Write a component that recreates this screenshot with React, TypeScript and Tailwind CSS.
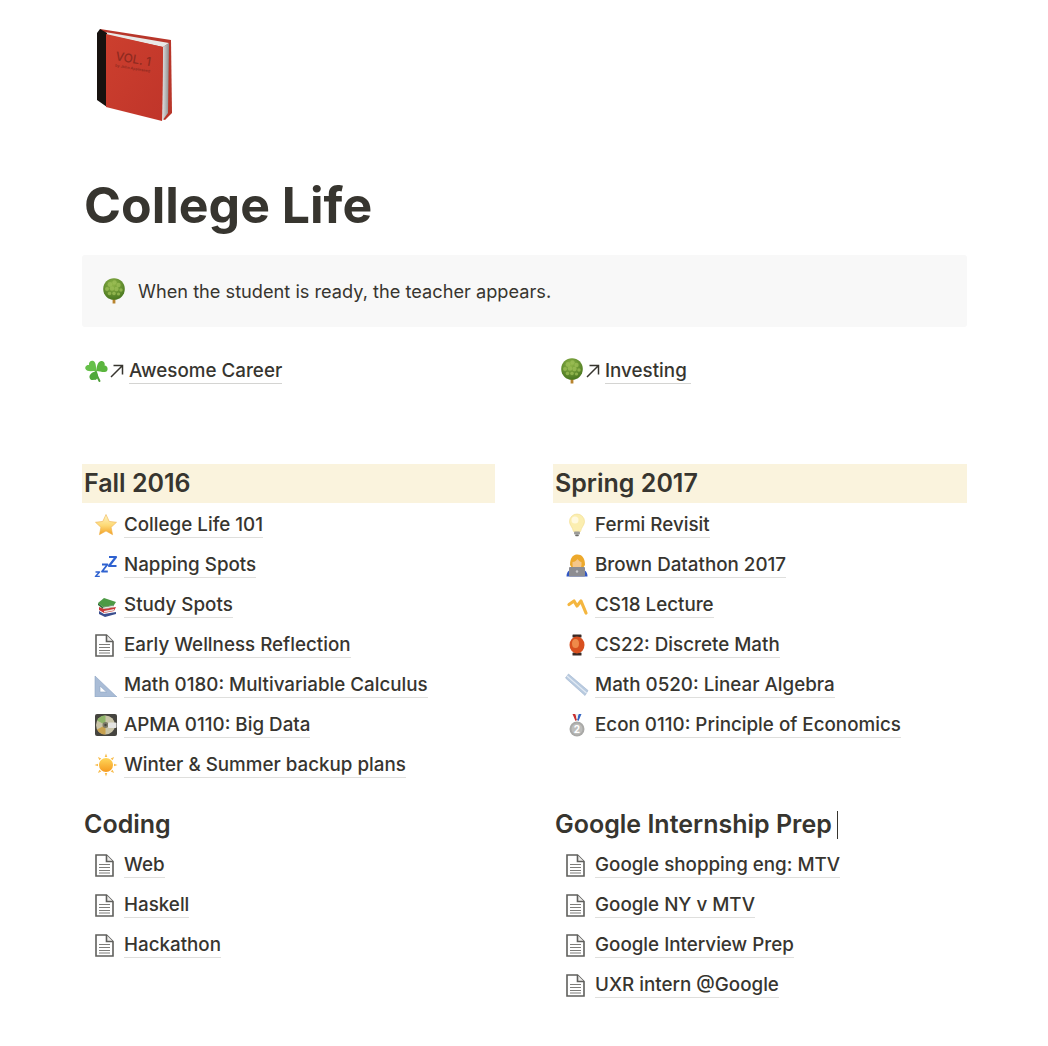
import type { ReactNode } from 'react';

const Doc = () => (
  <svg viewBox="0 0 19 23" className="mr-[4px] h-[23px] w-[19px]" fill="none" stroke="#5f5f5c" strokeWidth="1.600">
    <path d="M1 1h10.500L18 7.500V22H1z" fill="#fff" />
    <path d="M11.500 1v6.500H18" fill="#ecebea" />
    <path d="M4 10.500h11M4 13.500h11M4 16.500h11M4 19h11" strokeWidth="1.100" stroke="#7d7d7a" />
  </svg>
);

const Tree = () => (
  <svg viewBox="0 0 24 26" className="h-[26px] w-[24px]">
    <defs>
      <radialGradient id="crown" cx="0.45" cy="0.3" r="0.8">
        <stop offset="0" stopColor="#8fb548" />
        <stop offset="1" stopColor="#3f6e1a" />
      </radialGradient>
    </defs>
    <rect x="10.600" y="18" width="2.800" height="7.500" fill="#b8842f" />
    <circle cx="12" cy="11" r="10.800" fill="url(#crown)" />
    <g fill="#9dbf57" opacity=".75">
      <circle cx="8" cy="6.500" r="2.400" />
      <circle cx="12.500" cy="4.500" r="2.200" />
      <circle cx="16.500" cy="7" r="2.200" />
      <circle cx="5" cy="11" r="2" />
      <circle cx="10" cy="10.500" r="2.300" />
      <circle cx="14.500" cy="11" r="2.200" />
      <circle cx="19" cy="12" r="1.700" />
      <circle cx="7.500" cy="15.500" r="1.800" />
      <circle cx="12" cy="15.500" r="1.800" />
      <circle cx="16.500" cy="16" r="1.600" />
    </g>
  </svg>
);

const Clover = () => (
  <svg viewBox="0 0 24 24" className="h-[24px] w-[24px]">
    <path d="M12 13q1 5 3.500 9" stroke="#4fa03a" strokeWidth="2" fill="none" strokeLinecap="round" />
    <path d="M12 12C7 12 3 13 1.500 10 .5 7.500 3 5.500 5 6 4.500 3 7 1 9.500 2 11.500 3 12.500 7 12 12z" fill="#66c04a" />
    <path d="M12 12c1-5 1.500-9 5-10 2.500-.5 4.500 2 3.500 4.500 2.500 0 4 3 2.500 5.500-2 2.500-7 0-11 0z" fill="#5bb53f" />
    <path d="M12 12c-3 1-7 3-6.500 6.500.3 2 2.500 3.200 4.500 2.300 2 .7 3.500-1 3.500-3 .2-2-.5-4-1.500-5.800z" fill="#4fa83a" />
  </svg>
);

const Star = () => (
  <svg viewBox="0 0 24 24" className="h-[24px] w-[24px]">
    <defs>
      <linearGradient id="star" x1="0" y1="0" x2="0" y2="1">
        <stop offset="0" stopColor="#fff6c8" />
        <stop offset="0.55" stopColor="#fdd873" />
        <stop offset="1" stopColor="#f3a126" />
      </linearGradient>
    </defs>
    <path d="M12 1.500l3.200 6.900 7.300.9-5.400 5 1.500 7.400-6.600-3.700-6.600 3.700 1.500-7.400-5.400-5 7.300-.9z" fill="url(#star)" stroke="#eeb04a" strokeWidth=".6" />
  </svg>
);

const Zzz = () => (
  <svg viewBox="0 0 24 24" className="h-[24px] w-[24px]" fill="none" stroke="#2f62d0" strokeLinejoin="round">
    <path d="M1.500 19h4l-4 4.500h4.300" strokeWidth="1.500" />
    <path d="M8 11.500h5.500L8 18.500h5.800" strokeWidth="1.800" />
    <path d="M15 4h7l-7 9h7.500" strokeWidth="2.200" />
  </svg>
);

const Books = () => (
  <svg viewBox="0 0 24 24" className="h-[24px] w-[24px]">
    <path d="M4 10l6-5 12 4-2 3-11 2z" fill="#4d9a45" />
    <path d="M4 10l5 4 11-2v2L9 16l-5-4z" fill="#2e6d36" />
    <path d="M9 14.500l11-2v1.500L9 16z" fill="#e9e6dd" />
    <path d="M5 14l5 2 12-2-2 4-10 2-5-3z" fill="#c9383a" />
    <path d="M10 18l10-2v1.500L10 19.500z" fill="#ece8e0" />
    <path d="M5 18l5 3 12-2v2l-11 3-6-3z" fill="#3b4f8f" />
  </svg>
);

const Triangle = () => (
  <svg viewBox="0 0 24 24" className="h-[24px] w-[24px]">
    <path fillRule="evenodd" d="M1 3l22 21H1zM6 13v6h6.500z" fill="#a9bcd6" stroke="#8ea4c4" strokeWidth=".6" />
  </svg>
);

const Disc = () => (
  <svg viewBox="0 0 24 24" className="h-[24px] w-[24px]">
    <rect x="1" y="1" width="22" height="22" rx="2" fill="#45443f" />
    <circle cx="11.500" cy="12" r="9.500" fill="#c9c4a8" />
    <path d="M11.500 12L3 7.500A9.500 9.500 0 0 1 11.500 2.500z" fill="#8fb56a" />
    <path d="M11.500 12L3 16.500A9.500 9.500 0 0 0 11.500 21.500z" fill="#c9a24f" />
    <circle cx="11.500" cy="12" r="3" fill="#7d7a68" />
    <circle cx="11.500" cy="12" r="1.200" fill="#45443f" />
    <rect x="14" y="9.500" width="8.500" height="5.500" rx="1" fill="#e4e4e2" />
  </svg>
);

const Sun = () => (
  <svg viewBox="0 0 24 24" className="h-[24px] w-[24px]">
    <defs>
      <linearGradient id="sun" x1="0" y1="0" x2="0" y2="1">
        <stop offset="0" stopColor="#ffd75a" />
        <stop offset="1" stopColor="#f59a1f" />
      </linearGradient>
    </defs>
    <g fill="#f8bd4e">
      <path d="M12 .5l1.300 3.500h-2.600zM12 23.500l1.300-3.500h-2.600zM.5 12l3.500 1.300v-2.600zM23.500 12L20 13.300v-2.600z" />
      <path d="M3.900 3.900l3.400 1.500-1.900 1.900zM20.100 20.100l-3.400-1.500 1.900-1.900zM20.100 3.900l-1.500 3.400-1.900-1.900zM3.900 20.100l1.500-3.400 1.900 1.900z" />
    </g>
    <circle cx="12" cy="12" r="7" fill="url(#sun)" />
  </svg>
);

const Bulb = () => (
  <svg viewBox="0 0 24 24" className="h-[24px] w-[24px]">
    <path d="M12 1a7.500 7.500 0 0 0-7.500 7.500c0 3.500 3 5.500 4 10h7c1-4.500 4-6.500 4-10A7.500 7.500 0 0 0 12 1z" fill="#fbeeb0" stroke="#f2dc8c" strokeWidth=".6" />
    <circle cx="10" cy="7" r="3.500" fill="#fff9e0" />
    <rect x="9" y="18.500" width="6" height="3" rx="1" fill="#9c9c98" />
    <rect x="10.200" y="21.500" width="3.600" height="1.700" rx=".8" fill="#6d6d6a" />
  </svg>
);

const Technologist = () => (
  <svg viewBox="0 0 24 24" className="h-[24px] w-[24px]">
    <path d="M5 12C5 4 8.500 1.500 12.500 1.500S20 4.500 20 12l-2 3H7z" fill="#eda92c" />
    <path d="M7.500 9c2.500 0 4-1.500 5-3 1 1.500 2.500 3 4 3v3a4.500 4.500 0 0 1-9 0z" fill="#f6c78a" />
    <path d="M1.500 23.500c0-5.500 3.500-8 10.500-8s10.500 2.500 10.500 8z" fill="#2f55c4" />
    <rect x="4" y="14" width="16" height="9.500" rx="1" fill="#8d8d92" />
    <circle cx="12" cy="18.500" r="1.200" fill="#c9c9cc" />
  </svg>
);

const Boomerang = () => (
  <svg viewBox="0 0 24 24" className="h-[24px] w-[24px]" fill="none" stroke="#f4b63f" strokeWidth="3.200" strokeLinecap="round" strokeLinejoin="round">
    <path d="M4 11.500l5-3.500 3 5 4-5 5 12" />
  </svg>
);

const Lantern = () => (
  <svg viewBox="0 0 24 24" className="h-[24px] w-[24px]">
    <rect x="7.500" y="1.500" width="9" height="3" rx=".6" fill="#3a2a26" />
    <rect x="7.500" y="19.500" width="9" height="3" rx=".6" fill="#3a2a26" />
    <ellipse cx="12" cy="12" rx="7.500" ry="8.500" fill="#d8501f" />
    <ellipse cx="10.500" cy="10.500" rx="3.500" ry="4.500" fill="#ef8a4a" />
  </svg>
);

const Ruler = () => (
  <svg viewBox="0 0 24 24" className="h-[24px] w-[24px]">
    <path d="M3.500 1L23 17.500 20 22.500.5 5z" fill="#b9cbe0" stroke="#9fb4cf" strokeWidth=".6" />
    <path d="M2 3L21.500 20" stroke="#e2eaf3" strokeWidth="1.200" />
  </svg>
);

const Medal = () => (
  <svg viewBox="0 0 24 24" className="h-[24px] w-[24px]">
    <path d="M7.500 1h3l1.500 6-1.500 1z" fill="#c8302f" />
    <path d="M16.500 1h-3L12 7l1.500 1z" fill="#3566c2" />
    <path d="M10.500 1h3L12 7z" fill="#eeeeee" />
    <circle cx="12" cy="16" r="7.500" fill="#a9a9a7" />
    <circle cx="12" cy="16" r="5.500" fill="#bdbdbb" />
    <text x="12" y="19.500" textAnchor="middle" fontSize="10" fontWeight="700" fill="#fff" fontFamily="Inter, sans-serif">2</text>
  </svg>
);

const Book = () => (
  <svg viewBox="95 26 80 98" className="h-[98px] w-[80px]">
    <defs>
      <linearGradient id="cover" x1="0" y1="0" x2="1" y2="1">
        <stop offset="0" stopColor="#cc3f2e" />
        <stop offset="1" stopColor="#c0352a" />
      </linearGradient>
      <linearGradient id="pages" x1="0" y1="0" x2="1" y2="0">
        <stop offset="0" stopColor="#e4e4e4" />
        <stop offset="1" stopColor="#8d8d8d" />
      </linearGradient>
    </defs>
    <path d="M100 29l71 11 1 73-7 7-60-20z" fill="#b8362a" />
    <path d="M105 32l64 11-6 4-56-12z" fill="#e9e9e7" />
    <path d="M163 47l6-4-1 70-6 8z" fill="url(#pages)" />
    <path d="M97 33l3-4 7 4v74l-10-7z" fill="#17120f" />
    <path d="M106 34l57 13-1 74-56-14z" fill="url(#cover)" />
    <text x="0" y="0" transform="translate(115 60) rotate(10)" fontSize="12" fill="#8e2a20" fontFamily="Inter, sans-serif">VOL. 1</text>
    <text x="0" y="0" transform="translate(115 66.500) rotate(10)" fontSize="3.800" fontWeight="600" fill="#8e2a20" fontFamily="Inter, sans-serif">by John Appleseed</text>
  </svg>
);

const Page = ({ icon, label }: { icon: ReactNode; label: string }) => (
  <div className="flex h-[40px] items-center">
    <span className="flex w-[26px] justify-center">{icon}</span>
    <span className="ml-[5px] border-b border-[#dfdfdd] leading-[25px]">{label}</span>
  </div>
);

const Section = ({ children, first }: { children: ReactNode; first?: boolean }) => (
  <div className={`flex flex-col pl-[11px] ${first ? 'mt-[2px]' : ''}`}>{children}</div>
);

const LinkedPage = ({ icon, label, trailing }: { icon: ReactNode; label: string; trailing?: boolean }) => (
  <div className="flex h-[30px] items-center">
    {icon}
    <svg viewBox="0 0 16 16" className="ml-[2px] h-[16px] w-[16px]" fill="none" stroke="#37352f" strokeWidth="1.500">
      <path d="M1 14L12 3M3.500 2.500h9v9" />
    </svg>
    <span className={`ml-[3px] border-b border-[#d4d4d2] leading-[25px] ${trailing ? 'pr-[4px]' : ''}`}>{label}</span>
  </div>
);

export default function App() {
  return (
    <div className="h-[1046px] overflow-hidden bg-white pl-[82px] pr-[81px] font-['Inter','Liberation_Sans',sans-serif] text-[18.800px] font-[450] text-[#37352f]">
      <div className="pt-[26px] pl-[13px]">
        <Book />
      </div>

      <h1 className="mt-[52px] pl-[2px] text-[50px] leading-[58px] font-bold">College Life</h1>

      <div className="mt-[21px] flex h-[72px] items-center rounded-[3px] bg-[#f8f8f8] pl-[20px]">
        <Tree />
        <span className="ml-[12px] pt-[1px] text-[18.200px] font-normal">When the student is ready, the teacher appears.</span>
      </div>

      <div className="mt-[29px] flex">
        <div className="w-[478px] pl-[2px]">
          <LinkedPage icon={<Clover />} label="Awesome Career" />
        </div>
        <LinkedPage icon={<Tree />} label="Investing" trailing />
      </div>

      <div className="mt-[78px] grid grid-cols-[413px_414px] gap-x-[58px]">
        <div>
          <h2 className="flex h-[39px] items-center bg-[#faf3dd] pl-[2px] text-[25px] font-semibold">Fall 2016</h2>
          <Section first>
            <Page icon={<Star />} label="College Life 101" />
            <Page icon={<Zzz />} label="Napping Spots" />
            <Page icon={<Books />} label="Study Spots" />
            <Page icon={<Doc />} label="Early Wellness Reflection" />
            <Page icon={<Triangle />} label="Math 0180: Multivariable Calculus" />
            <Page icon={<Disc />} label="APMA 0110: Big Data" />
            <Page icon={<Sun />} label="Winter & Summer backup plans" />
          </Section>
          <h2 className="mt-[20px] flex h-[40px] items-center pl-[2px] text-[25px] font-semibold">Coding</h2>
          <Section>
            <Page icon={<Doc />} label="Web" />
            <Page icon={<Doc />} label="Haskell" />
            <Page icon={<Doc />} label="Hackathon" />
          </Section>
        </div>

        <div>
          <h2 className="flex h-[39px] items-center bg-[#faf3dd] pl-[2px] text-[25px] font-semibold">Spring 2017</h2>
          <Section first>
            <Page icon={<Bulb />} label="Fermi Revisit" />
            <Page icon={<Technologist />} label="Brown Datathon 2017" />
            <Page icon={<Boomerang />} label="CS18 Lecture" />
            <Page icon={<Lantern />} label="CS22: Discrete Math" />
            <Page icon={<Ruler />} label="Math 0520: Linear Algebra" />
            <Page icon={<Medal />} label="Econ 0110: Principle of Economics" />
            <div className="h-[40px]" />
          </Section>
          <h2 className="mt-[20px] flex h-[40px] items-center pl-[2px] text-[25px] font-semibold">
            Google Internship Prep
            <span className="ml-[5px] h-[28px] w-px bg-[#37352f]" />
          </h2>
          <Section>
            <Page icon={<Doc />} label="Google shopping eng: MTV" />
            <Page icon={<Doc />} label="Google NY v MTV" />
            <Page icon={<Doc />} label="Google Interview Prep" />
            <Page icon={<Doc />} label="UXR intern @Google" />
          </Section>
        </div>
      </div>
    </div>
  );
}
